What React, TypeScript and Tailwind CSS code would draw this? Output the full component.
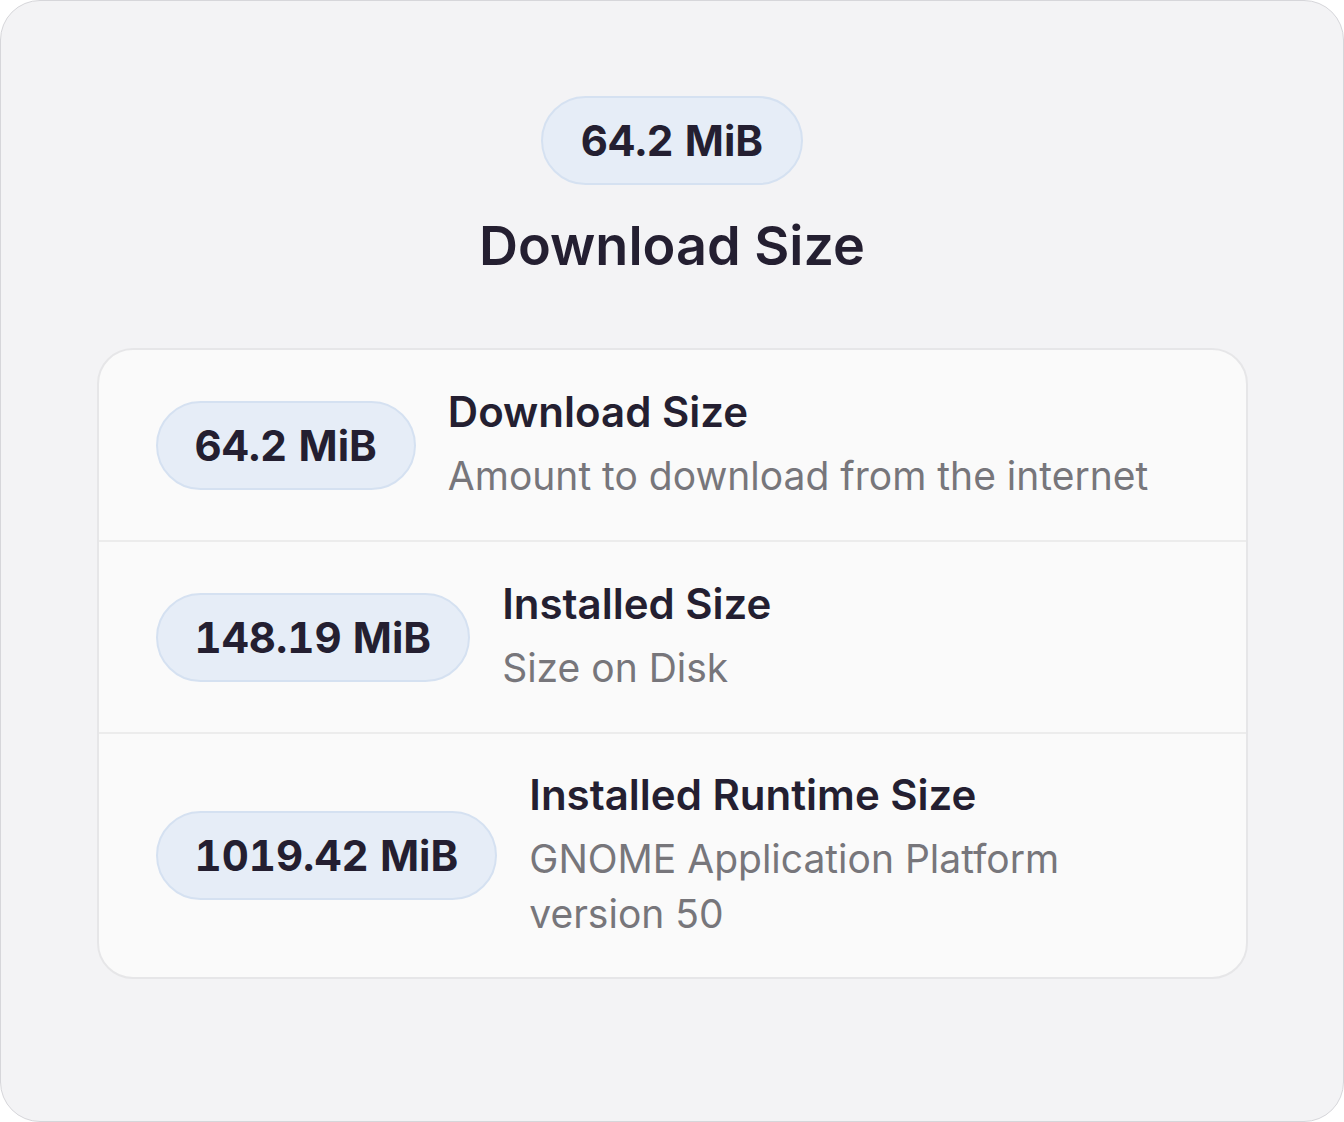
import React from "react";

const font = { fontFamily: "Inter, 'Noto Sans', sans-serif" };

function Pill({ children, className = "" }: { children: React.ReactNode; className?: string }) {
  return (
    <div
      className={
        "flex h-[89px] shrink-0 items-center justify-center rounded-full border-2 border-[#d5e1f1] bg-[#e6edf7] px-[37px] text-[42px] font-bold tabular-nums text-[#241f31] " +
        className
      }
    >
      {children}
    </div>
  );
}

function Row({
  size,
  title,
  sub,
  last,
  className = "",
}: {
  size: string;
  title: string;
  sub: string;
  last?: boolean;
  className?: string;
}) {
  return (
    <div
      className={
        "flex items-center gap-[32px] pl-[57px] pr-[58px] " +
        (last ? "" : "border-b-2 border-[#ececec] ") +
        className
      }
    >
      <Pill>{size}</Pill>
      <div className="flex flex-col">
        <div className="text-[42px] font-semibold leading-[48px] text-[#241f31]">{title}</div>
        <div className="mt-[12px] text-[39px] leading-[55px] text-[#77767b]">{sub}</div>
      </div>
    </div>
  );
}

export default function App() {
  return (
    <div className="h-[1122px] w-[1344px] bg-white" style={font}>
      <div className="flex h-full w-full flex-col items-center rounded-[40px] border border-[#d6d6da] bg-[#f3f3f5] pt-[95px]">
        <Pill className="bg-[#e3e8f1] px-[38px]">64.2 MiB</Pill>
        <h1 className="mt-[30px] text-[54px] font-semibold leading-[62px] text-[#241f31]">Download Size</h1>
        <div className="mt-[71px] flex w-[1151px] flex-col rounded-[36px] border-2 border-[#e6e6e8] bg-[#fafafa]">
          <Row size="64.2 MiB" title="Download Size" sub="Amount to download from the internet" className="h-[192px]" />
          <Row size="148.19 MiB" title="Installed Size" sub="Size on Disk" className="h-[192px]" />
          <Row
            size="1019.42 MiB"
            title="Installed Runtime Size"
            sub="GNOME Application Platform version 50"
            last
            className="h-[243px]"
          />
        </div>
      </div>
    </div>
  );
}
